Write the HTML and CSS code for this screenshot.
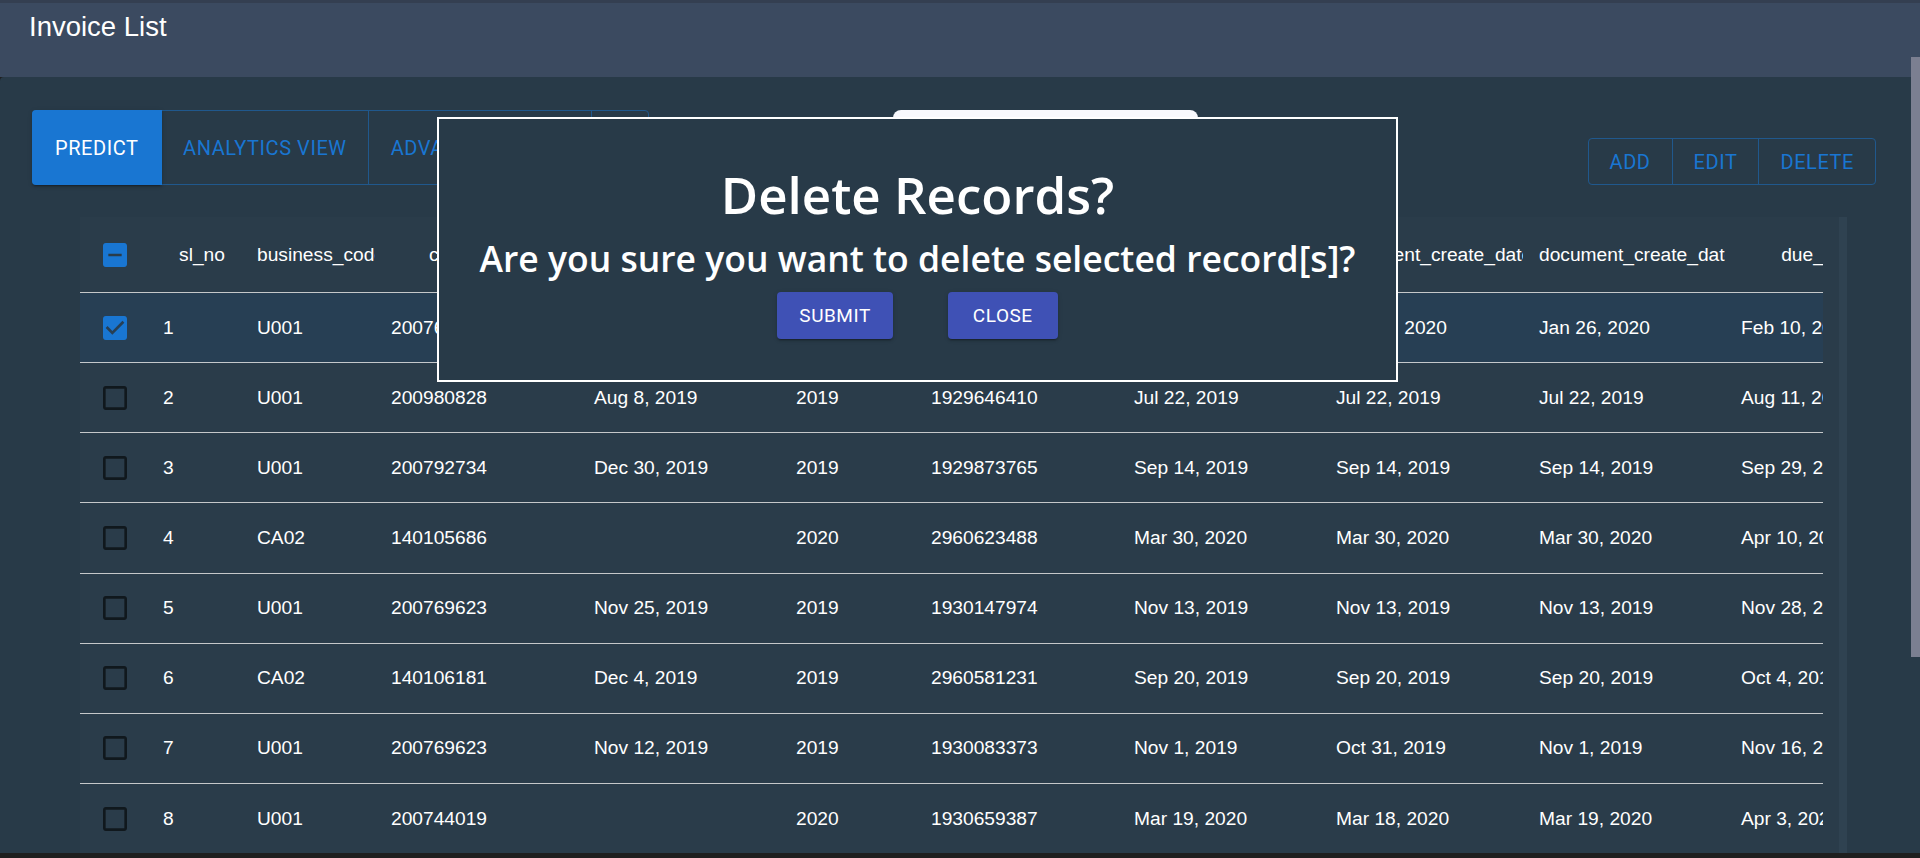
FILE: index.html
```html
<!DOCTYPE html>
<html lang="en">
<head>
<meta charset="utf-8">
<title>Invoice List</title>
<link rel="stylesheet" href="styles.css">
</head>
<body>
<header class="topbar"><h1 class="title">Invoice List</h1></header>
<main class="panel">
  <div class="toolbar">
    <div class="toolbar-left">
      <div class="btn-group tabs">
        <button class="btn btn-contained">Predict</button>
        <button class="btn">Analytics View</button>
        <button class="btn">Advance Search</button>
        <button class="btn btn-icon"><svg viewBox="0 0 24 24" width="24" height="24"><path fill="#1976d2" d="M17.65 6.35A7.958 7.958 0 0 0 12 4c-4.42 0-7.99 3.58-7.99 8s3.57 8 7.99 8c3.73 0 6.84-2.55 7.73-6h-2.08A5.99 5.99 0 0 1 12 18c-3.31 0-6-2.69-6-6s2.69-6 6-6c1.66 0 3.14.69 4.22 1.78L13 11h7V4l-2.35 2.35z"/></svg></button>
      </div>
      <div class="search-box"></div>
    </div>
    <div class="btn-group actions">
      <button class="btn">Add</button>
      <button class="btn">Edit</button>
      <button class="btn">Delete</button>
    </div>
  </div>
  <div class="table-area">
    <div class="table-viewport">
      <table class="grid">
        <colgroup>
          <col class="c0"><col class="c1"><col class="c2"><col class="c3"><col class="c4"><col class="c5"><col class="c6"><col class="c7"><col class="c8"><col class="c9"><col class="c10">
        </colgroup>
        <thead>
          <tr>
            <th class="cb"><svg class="chk chk-on" viewBox="0 0 24 24"><path fill-rule="evenodd" d="M19 3H5c-1.1 0-2 .9-2 2v14c0 1.1.9 2 2 2h14c1.1 0 2-.9 2-2V5c0-1.1-.9-2-2-2zm-2 10H7v-2h10v2z"/></svg></th>
            <th>sl_no</th>
            <th class="th-left">business_code</th>
            <th>cust_number</th>
            <th>clear_date</th>
            <th class="th-left">buisness_year</th>
            <th>doc_id</th>
            <th>posting_date</th>
            <th class="th-left">document_create_date</th>
            <th class="th-left">document_create_date.1</th>
            <th>due_in_date</th>
          </tr>
        </thead>
        <tbody>
          <tr class="selected">
            <td class="cb"><svg class="chk chk-on" viewBox="0 0 24 24"><path fill-rule="evenodd" d="M19 3H5c-1.11 0-2 .9-2 2v14c0 1.1.89 2 2 2h14c1.11 0 2-.9 2-2V5c0-1.1-.89-2-2-2zm-9 14l-5-5 1.41-1.41L10 14.17l7.59-7.59L19 8l-9 9z"/></svg></td>
            <td>1</td><td>U001</td><td>200769623</td><td>Feb 11, 2020</td><td>2020</td><td>1930438491</td><td>Jan 26, 2020</td><td>Jan 25, 2020</td><td>Jan 26, 2020</td><td>Feb 10, 2020</td>
          </tr>
          <tr>
            <td class="cb"><svg class="chk" viewBox="0 0 24 24"><path d="M19 5v14H5V5h14m0-2H5c-1.11 0-2 .9-2 2v14c0 1.1.89 2 2 2h14c1.1 0 2-.9 2-2V5c0-1.1-.9-2-2-2z"/></svg></td>
            <td>2</td><td>U001</td><td>200980828</td><td>Aug 8, 2019</td><td>2019</td><td>1929646410</td><td>Jul 22, 2019</td><td>Jul 22, 2019</td><td>Jul 22, 2019</td><td>Aug 11, 2019</td>
          </tr>
          <tr>
            <td class="cb"><svg class="chk" viewBox="0 0 24 24"><path d="M19 5v14H5V5h14m0-2H5c-1.11 0-2 .9-2 2v14c0 1.1.89 2 2 2h14c1.1 0 2-.9 2-2V5c0-1.1-.9-2-2-2z"/></svg></td>
            <td>3</td><td>U001</td><td>200792734</td><td>Dec 30, 2019</td><td>2019</td><td>1929873765</td><td>Sep 14, 2019</td><td>Sep 14, 2019</td><td>Sep 14, 2019</td><td>Sep 29, 2019</td>
          </tr>
          <tr>
            <td class="cb"><svg class="chk" viewBox="0 0 24 24"><path d="M19 5v14H5V5h14m0-2H5c-1.11 0-2 .9-2 2v14c0 1.1.89 2 2 2h14c1.1 0 2-.9 2-2V5c0-1.1-.9-2-2-2z"/></svg></td>
            <td>4</td><td>CA02</td><td>140105686</td><td></td><td>2020</td><td>2960623488</td><td>Mar 30, 2020</td><td>Mar 30, 2020</td><td>Mar 30, 2020</td><td>Apr 10, 2020</td>
          </tr>
          <tr>
            <td class="cb"><svg class="chk" viewBox="0 0 24 24"><path d="M19 5v14H5V5h14m0-2H5c-1.11 0-2 .9-2 2v14c0 1.1.89 2 2 2h14c1.1 0 2-.9 2-2V5c0-1.1-.9-2-2-2z"/></svg></td>
            <td>5</td><td>U001</td><td>200769623</td><td>Nov 25, 2019</td><td>2019</td><td>1930147974</td><td>Nov 13, 2019</td><td>Nov 13, 2019</td><td>Nov 13, 2019</td><td>Nov 28, 2019</td>
          </tr>
          <tr>
            <td class="cb"><svg class="chk" viewBox="0 0 24 24"><path d="M19 5v14H5V5h14m0-2H5c-1.11 0-2 .9-2 2v14c0 1.1.89 2 2 2h14c1.1 0 2-.9 2-2V5c0-1.1-.9-2-2-2z"/></svg></td>
            <td>6</td><td>CA02</td><td>140106181</td><td>Dec 4, 2019</td><td>2019</td><td>2960581231</td><td>Sep 20, 2019</td><td>Sep 20, 2019</td><td>Sep 20, 2019</td><td>Oct 4, 2019</td>
          </tr>
          <tr>
            <td class="cb"><svg class="chk" viewBox="0 0 24 24"><path d="M19 5v14H5V5h14m0-2H5c-1.11 0-2 .9-2 2v14c0 1.1.89 2 2 2h14c1.1 0 2-.9 2-2V5c0-1.1-.9-2-2-2z"/></svg></td>
            <td>7</td><td>U001</td><td>200769623</td><td>Nov 12, 2019</td><td>2019</td><td>1930083373</td><td>Nov 1, 2019</td><td>Oct 31, 2019</td><td>Nov 1, 2019</td><td>Nov 16, 2019</td>
          </tr>
          <tr>
            <td class="cb"><svg class="chk" viewBox="0 0 24 24"><path d="M19 5v14H5V5h14m0-2H5c-1.11 0-2 .9-2 2v14c0 1.1.89 2 2 2h14c1.1 0 2-.9 2-2V5c0-1.1-.9-2-2-2z"/></svg></td>
            <td>8</td><td>U001</td><td>200744019</td><td></td><td>2020</td><td>1930659387</td><td>Mar 19, 2020</td><td>Mar 18, 2020</td><td>Mar 19, 2020</td><td>Apr 3, 2020</td>
          </tr>
        </tbody>
      </table>
    </div>
    <div class="vscroll"></div>
  </div>
</main>
<div class="modal" role="dialog">
  <h2 class="modal-title">Delete Records?</h2>
  <p class="modal-text">Are you sure you want to delete selected record[s]?</p>
  <div class="modal-actions">
    <button class="modal-btn">Submit</button>
    <button class="modal-btn modal-btn-close">Close</button>
  </div>
</div>
<div class="page-thumb"></div>
</body>
</html>
```
FILE: styles.css
```css
* { box-sizing: border-box; }
html, body { margin: 0; padding: 0; }
body {
  width: 1920px;
  height: 858px;
  overflow: hidden;
  position: relative;
  background: #1f1f1f;
  color: #fff;
  font-family: "Liberation Sans", Arial, sans-serif;
}

.topbar {
  height: 77px;
  background: #3b4a60;
  border-top: 3px solid #343f51;
  padding-left: 29px;
}
.title {
  margin: 0;
  padding-top: 9px;
  font-size: 27.5px;
  line-height: 30px;
  font-weight: 400;
  color: #fff;
}

.panel {
  height: 776px;
  background: #283a48;
  border-radius: 4px 4px 0 0;
  padding: 33px 44px 0 32px;
  overflow: hidden;
}

.toolbar {
  display: flex;
  justify-content: space-between;
  align-items: flex-end;
  height: 75px;
}
.toolbar-left {
  display: flex;
  align-items: flex-start;
  height: 75px;
}

.btn-group {
  display: flex;
  border: 1px solid #20588d;
  border-radius: 4px;
}
.tabs { height: 75px; }
.actions { height: 47px; }

.btn {
  display: flex;
  align-items: center;
  justify-content: center;
  margin: 0;
  padding: 0 21.5px;
  background: transparent;
  border: 0;
  font-family: Roboto, "Liberation Sans", sans-serif;
  font-weight: 400;
  font-size: 20px;
  letter-spacing: 0.57px;
  text-transform: uppercase;
  color: #1976d2;
  white-space: nowrap;
}
.actions .btn { padding: 0 21px; }
.btn + .btn { border-left: 1px solid #20588d; }
.btn-contained {
  margin: -1px 0 -1px -1px;
  padding: 0 23px;
  background: #1976d2;
  color: #fff;
  border-radius: 4px 0 0 4px;
  box-shadow: 0 3px 1px -2px rgba(0,0,0,.2), 0 2px 2px 0 rgba(0,0,0,.14), 0 1px 5px 0 rgba(0,0,0,.12);
}
.btn-contained + .btn { border-left: 0; }
.btn-icon { width: 57px; padding: 0; }

.search-box {
  margin-left: 244px;
  width: 305px;
  height: 56px;
  background: #f8f9fd;
  border-radius: 8px;
}

.table-area {
  display: flex;
  margin-top: 32px;
  margin-left: 48px;
  width: 1767px;
  height: 636px;
  background: #2a3c4a;
}
.table-viewport {
  width: 1743px;
  overflow: hidden;
}
.vscroll {
  width: 8px;
  margin-left: 16px;
  background: #2f4251;
}

.grid {
  width: 1847px;
  table-layout: fixed;
  border-collapse: separate;
  border-spacing: 0;
  font-size: 19.2px;
}
.c0 { width: 67px; }
.c1 { width: 94px; }
.c2 { width: 134px; }
.c3 { width: 203px; }
.c4 { width: 202px; }
.c5 { width: 135px; }
.c6 { width: 203px; }
.c7 { width: 202px; }
.c8 { width: 203px; }
.c9 { width: 202px; }
.c10 { width: 202px; }

.grid th, .grid td {
  padding: 0 0 0 16px;
  white-space: nowrap;
  overflow: hidden;
  vertical-align: middle;
  border-bottom: 1px solid rgba(224,224,224,.85);
  color: #fff;
}
.grid th {
  height: 76px;
  font-weight: 400;
  text-align: center;
}
.grid th.th-left { text-align: left; }
.grid td {
  height: 70.15px;
  text-align: left;
}
.grid .cb {
  padding-left: 19px;
  text-align: left;
}
.grid tr.selected td { background: #273f54; }

.chk {
  display: block;
  width: 32px;
  height: 32px;
  fill: rgba(0,0,0,.6);
}
.chk-on { fill: #1976d2; }

.modal {
  position: absolute;
  left: 437px;
  top: 117px;
  width: 961px;
  height: 265px;
  border: 2px solid #fff;
  background: #283a48;
  padding-top: 45px;
  text-align: center;
  font-family: "Open Sans", "Noto Sans", sans-serif;
  color: #fff;
}
.modal-title {
  margin: 0;
  font-size: 51px;
  line-height: 60px;
  font-weight: 600;
}
.modal-text {
  margin: 12px 0 0;
  font-size: 35.5px;
  line-height: 44px;
  font-weight: 600;
}
.modal-actions {
  display: flex;
  justify-content: center;
  gap: 55px;
  margin-top: 12px;
}
.modal-btn {
  height: 47px;
  padding: 0 22px;
  border: 0;
  border-radius: 4px;
  background: #3f51b5;
  color: #fff;
  font-family: Roboto, "Liberation Sans", sans-serif;
  font-weight: 400;
  font-size: 19px;
  letter-spacing: 0.54px;
  text-transform: uppercase;
  box-shadow: 0 3px 1px -2px rgba(0,0,0,.2), 0 2px 2px 0 rgba(0,0,0,.14), 0 1px 5px 0 rgba(0,0,0,.12);
}
.modal-btn-close { padding: 0 25px; }

.page-thumb {
  position: absolute;
  right: 0;
  top: 57px;
  width: 9px;
  height: 600px;
  background: #7b7f91;
}
```
